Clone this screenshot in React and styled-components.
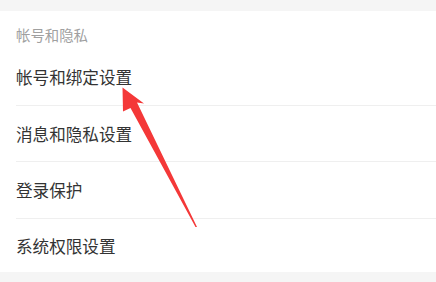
import React from 'react'
import styled, { createGlobalStyle } from 'styled-components'

const GlobalStyle = createGlobalStyle`
    html, body {
        margin: 0;
        padding: 0;
        background: #f5f5f5;
    }
    body {
        font-family: "Noto Sans CJK SC", "Noto Sans", sans-serif;
    }
`

const Page = styled.div`
    position: relative;
    width: 436px;
    height: 282px;
    overflow: hidden;
    background: #f5f5f5;
    padding: 11px 0 10px;
    box-sizing: border-box;
`

const Card = styled.div`
    background: #fff;
`

const SectionTitle = styled.div`
    padding: 14px 16px 4px;
    height: 20px;
    line-height: 20px;
    font-size: 14.4px;
    color: #a0a0a0;
`

const Item = styled.div`
    margin-left: 16px;
    height: ${p => (p.last ? '53.5px' : '56.5px')};
    display: flex;
    align-items: center;
    padding-top: 1px;
    box-sizing: border-box;
    font-size: 16.6px;
    color: #333;
    border-bottom: ${p => (p.last ? 'none' : '1px solid #efefef')};
`

const Arrow = styled.svg`
    position: absolute;
    left: 0;
    top: 0;
    pointer-events: none;
`

const items = ['帐号和绑定设置', '消息和隐私设置', '登录保护', '系统权限设置']

const App = () => {
    return (
        <>
            <GlobalStyle />
            <Page>
                <Card>
                    <SectionTitle>帐号和隐私</SectionTitle>
                    {items.map((label, i) => (
                        <Item key={label} last={i === items.length - 1}>
                            {label}
                        </Item>
                    ))}
                </Card>
                {/* red annotation arrow over the first row */}
                <Arrow width="436" height="282" viewBox="0 0 436 282">
                    <polygon
                        points="122.5,87.5 144,103.5 137,102.5 197,227 195.5,227 130.5,108 123,111.5"
                        fill="#f43838"
                    />
                </Arrow>
            </Page>
        </>
    )
}

export default App
